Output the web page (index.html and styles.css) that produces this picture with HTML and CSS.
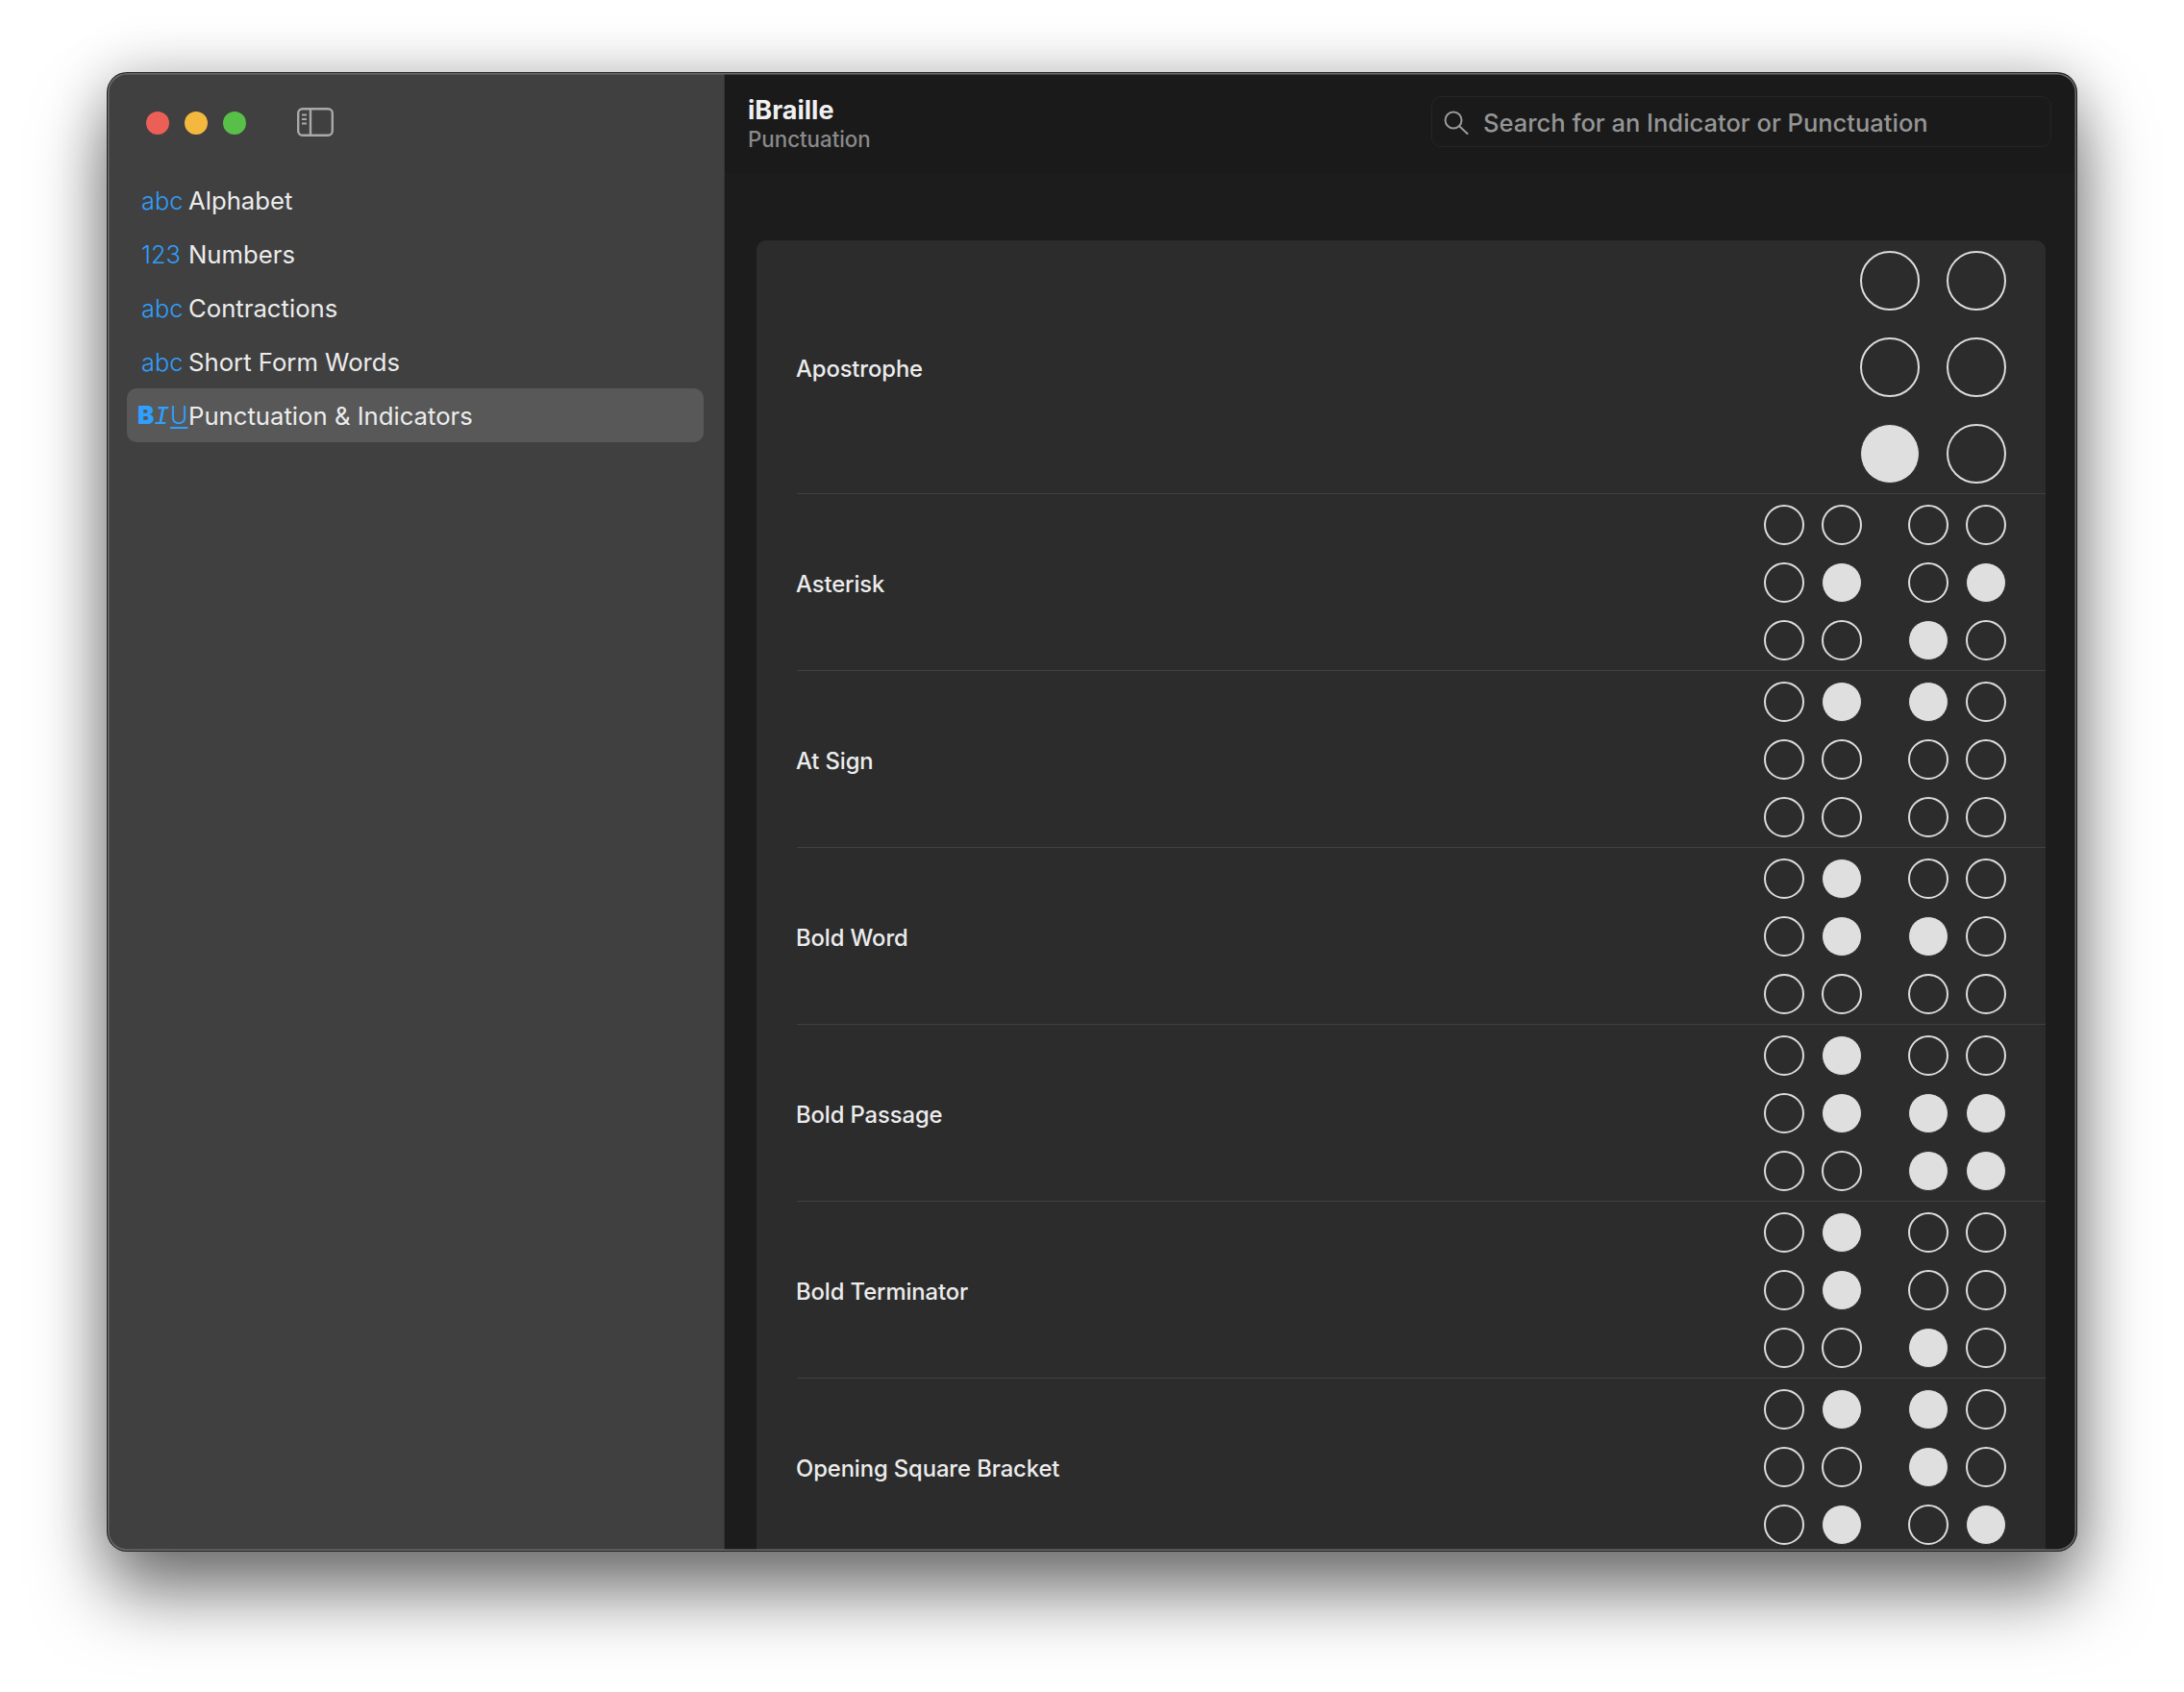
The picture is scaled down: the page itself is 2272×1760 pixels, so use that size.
FILE: index.html
```html
<!DOCTYPE html>
<html lang="en">
<head>
<meta charset="utf-8">
<title>iBraille</title>
<link rel="stylesheet" href="styles.css">
</head>
<body>
<div class="window">
  <aside class="sidebar">
    <div class="titlebar">
      <span class="light red"></span><span class="light yellow"></span><span class="light green"></span>
      <svg class="toggle" width="38" height="30" viewBox="0 0 38 30" fill="none" stroke="#a9a9a9" stroke-width="2.400"><rect x="1.200" y="1.200" width="35.600" height="27.600" rx="4.500"/><path d="M14 1v28"/><path d="M5 7.500h5M5 12h5M5 16.500h5" stroke-width="1.800"/></svg>
    </div>
    <nav class="nav">
      <a class="item"><span class="ico">abc</span><span>Alphabet</span></a>
      <a class="item"><span class="ico">123</span><span>Numbers</span></a>
      <a class="item"><span class="ico">abc</span><span>Contractions</span></a>
      <a class="item"><span class="ico">abc</span><span>Short Form Words</span></a>
      <a class="item selected"><span class="ico biu"><b>B</b><i>I</i><u>U</u></span><span>Punctuation &amp; Indicators</span></a>
    </nav>
  </aside>
  <main class="main">
    <header class="header">
      <div class="heading"><div class="title">iBraille</div><div class="subtitle">Punctuation</div></div>
      <div class="search">
        <svg width="26" height="26" viewBox="0 0 26 26" fill="none" stroke="#9a9a9a" stroke-width="2"><circle cx="10" cy="11" r="8.500"/><path d="M16.200 17.200L24.500 25" stroke-linecap="round"/></svg>
        <span>Search for an Indicator or Punctuation</span>
      </div>
    </header>
    <section class="panel" id="panel">
      <div class="row big"><span class="label">Apostrophe</span>
        <div class="cell"><i class="dot"></i><i class="dot"></i><i class="dot"></i><i class="dot"></i><i class="dot on"></i><i class="dot"></i></div>
      </div>
      <div class="row"><span class="label">Asterisk</span><div class="cells">
        <div class="cell"><i class="dot"></i><i class="dot"></i><i class="dot"></i><i class="dot on"></i><i class="dot"></i><i class="dot"></i></div>
        <div class="cell"><i class="dot"></i><i class="dot"></i><i class="dot"></i><i class="dot on"></i><i class="dot on"></i><i class="dot"></i></div>
      </div></div>
      <div class="row"><span class="label">At Sign</span><div class="cells">
        <div class="cell"><i class="dot"></i><i class="dot on"></i><i class="dot"></i><i class="dot"></i><i class="dot"></i><i class="dot"></i></div>
        <div class="cell"><i class="dot on"></i><i class="dot"></i><i class="dot"></i><i class="dot"></i><i class="dot"></i><i class="dot"></i></div>
      </div></div>
      <div class="row"><span class="label">Bold Word</span><div class="cells">
        <div class="cell"><i class="dot"></i><i class="dot on"></i><i class="dot"></i><i class="dot on"></i><i class="dot"></i><i class="dot"></i></div>
        <div class="cell"><i class="dot"></i><i class="dot"></i><i class="dot on"></i><i class="dot"></i><i class="dot"></i><i class="dot"></i></div>
      </div></div>
      <div class="row"><span class="label">Bold Passage</span><div class="cells">
        <div class="cell"><i class="dot"></i><i class="dot on"></i><i class="dot"></i><i class="dot on"></i><i class="dot"></i><i class="dot"></i></div>
        <div class="cell"><i class="dot"></i><i class="dot"></i><i class="dot on"></i><i class="dot on"></i><i class="dot on"></i><i class="dot on"></i></div>
      </div></div>
      <div class="row"><span class="label">Bold Terminator</span><div class="cells">
        <div class="cell"><i class="dot"></i><i class="dot on"></i><i class="dot"></i><i class="dot on"></i><i class="dot"></i><i class="dot"></i></div>
        <div class="cell"><i class="dot"></i><i class="dot"></i><i class="dot"></i><i class="dot"></i><i class="dot on"></i><i class="dot"></i></div>
      </div></div>
      <div class="row"><span class="label">Opening Square Bracket</span><div class="cells">
        <div class="cell"><i class="dot"></i><i class="dot on"></i><i class="dot"></i><i class="dot"></i><i class="dot"></i><i class="dot on"></i></div>
        <div class="cell"><i class="dot on"></i><i class="dot"></i><i class="dot on"></i><i class="dot"></i><i class="dot"></i><i class="dot on"></i></div>
      </div></div>
    </section>
  </main>
</div>
</body>
</html>
```

FILE: styles.css
```css
* { box-sizing: border-box; }
html, body { margin: 0; height: 100%; }
body {
  width: 2272px; height: 1760px; overflow: hidden; background: #fff;
  padding: 76px 112px 147px 112px;
  font-family: Inter, "Noto Sans", sans-serif; color: #ececec;
}
.window {
  display: flex; width: 2048px; height: 1537px; border-radius: 20px; overflow: hidden;
  background: #1c1c1c; position: relative;
  box-shadow: 0 0 0 1px #1e1e1e, 0 44px 76px rgba(0,0,0,.52), 0 0 60px rgba(0,0,0,.22);
}
.window::after {
  content: ""; position: absolute; inset: 0; border-radius: 20px; pointer-events: none;
  box-shadow: inset 0 0 0 1.500px #6c6c6c;
}
.sidebar { width: 642px; flex: none; background: #404040; border-right: 1px solid #333; }
.titlebar { height: 101px; padding: 40px 0 0 40px; display: flex; align-items: flex-start; }
.light { width: 24px; height: 24px; border-radius: 50%; margin-right: 16px; flex: none; }
.red { background: #ec5f57; }
.yellow { background: #f4b83f; }
.green { background: #58bf48; }
.toggle { margin: -4px 0 0 37px; }
.nav { padding: 3px 21px 0 20px; display: flex; flex-direction: column; }
.item { height: 56px; display: flex; align-items: center; gap: 7px; padding-left: 15px; font-size: 25.700px; border-radius: 10px; color: #ececec; }
.item.selected { background: #585858; padding-left: 11px; gap: 0; }
.ico { width: 42px; color: #2f9fff; font-weight: 350; text-align: left; font-size: 25.300px; }
.biu { width: 53px; display: flex; align-items: baseline; color: #2fa0ff; line-height: 30px; font-size: 26px; margin-top: 2px; }
.biu b { font-weight: 900; width: 18px; }
.biu i { font-family: "Liberation Mono", monospace; font-size: 27px; font-weight: 400; width: 16px; margin-left: -1px; text-align: center; }
.biu u { width: 19px; padding-left: 1px; font-size: 25px; font-weight: 350; text-decoration-thickness: 1.500px; text-underline-offset: 3px; }
.main { flex: 1; min-width: 0; display: flex; flex-direction: column; }
.header { height: 104px; background: #1a1a1a; padding: 23px 26px 0 24px; display: flex; justify-content: space-between; align-items: flex-start; flex: none; }
.title { font-size: 27px; font-weight: 700; color: #f0f0f0; line-height: 32px; }
.subtitle { font-size: 22.300px; font-weight: 450; color: #8a8a8a; line-height: 27px; }
.search { width: 645px; height: 53px; margin-top: 1px; border: 1.500px solid #262626; border-radius: 10px; display: flex; align-items: center; gap: 15px; padding: 1px 0 0 12px; font-size: 25.500px; font-weight: 450; color: #959595; }
.panel { margin: 70px 32px 0 33px; background: #2c2c2c; border-radius: 10px 10px 0 0; padding-left: 42px; flex: 1; min-height: 0; overflow: hidden; }
.row { height: 184px; border-top: 1px solid #414141; padding-top: 1px; display: flex; align-items: center; justify-content: space-between; padding-right: 41px; }
.label { font-size: 23.800px; letter-spacing: -.1px; font-weight: 500; color: #ececec; margin: 2px 0 0 -1px; }
.cells { display: flex; gap: 48px; }
.cell { display: grid; grid-template-columns: repeat(2, 42px); grid-auto-rows: 42px; gap: 18px; }
.dot { display: block; width: 42px; height: 42px; border-radius: 50%; border: 2px solid #dcdcdc; }
.dot.on { border: 1px solid #2c2c2c; background: #dfdfdf; }
.big { height: 263px; border-top: 0; padding-top: 1px; }
.big .cell { grid-template-columns: repeat(2, 62px); grid-auto-rows: 62px; gap: 28px; }
.big .dot { width: 62px; height: 62px; }
```
